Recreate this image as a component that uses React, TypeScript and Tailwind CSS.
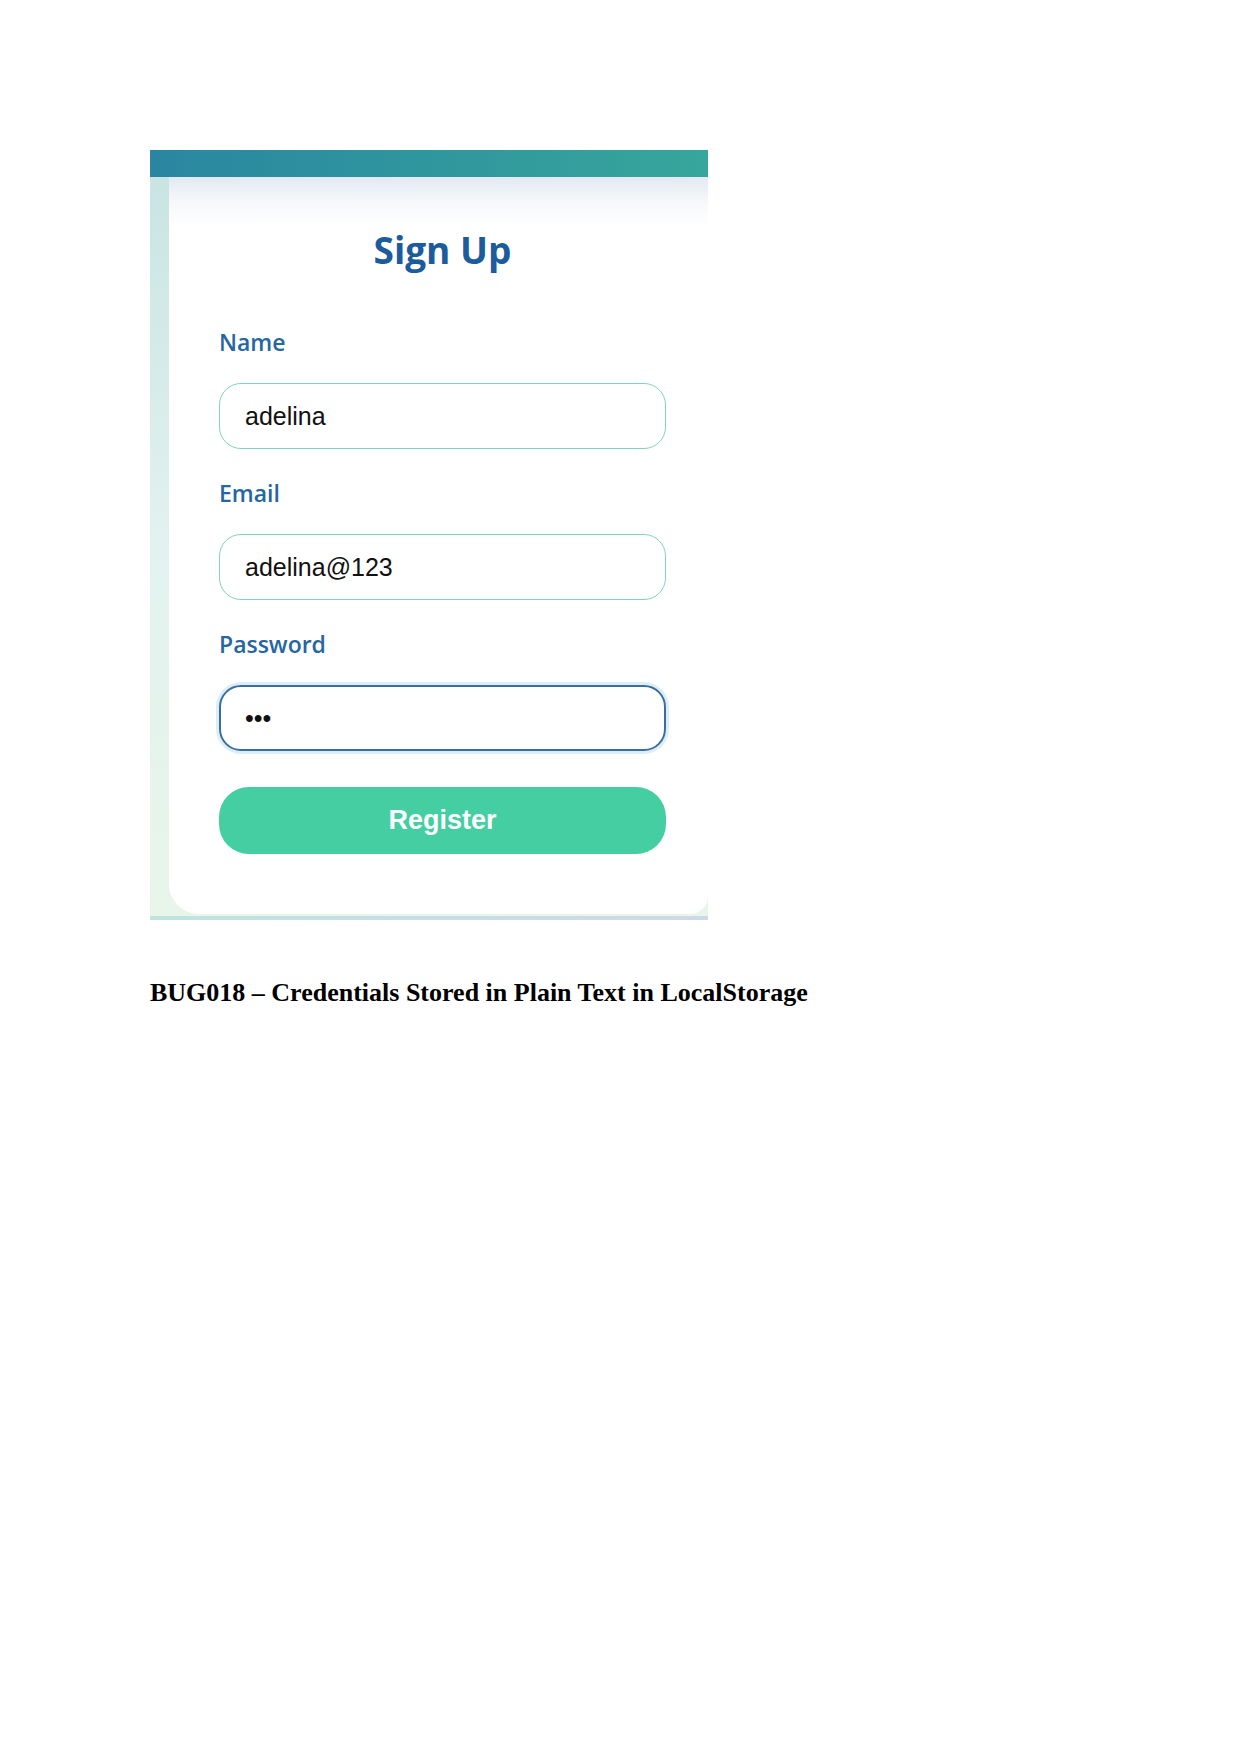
export default function App() {
  return (
    <div className="min-h-[1755px] bg-white pl-[150px] pt-[150px]">
      <div className="flex h-[770px] w-[558px] flex-col">
        <div className="h-[27px] bg-gradient-to-r from-[#2a86a0] to-[#37a69b]" />
        <div className="flex flex-1 bg-gradient-to-b from-[#c9e4e3] via-[#e2f2ef] to-[#e8f5e9] pb-[2px] pl-[19px]">
          <div className="flex flex-1 flex-col items-stretch rounded-bl-[30px] rounded-br-[18px] bg-[linear-gradient(to_bottom,#e3e8f2_0px,#f6f8fb_25px,#ffffff_50px)] pl-[50px] pr-[42px]">
            <h1 className="mt-[49px] text-center font-['Open_Sans','Noto_Sans',sans-serif] text-[37px] font-bold leading-[48px] text-[#1c5b9c]">
              Sign Up
            </h1>
            <Field label="Name" value="adelina" mt="mt-[54px]" />
            <Field label="Email" value="adelina@123" mt="mt-[30px]" />
            <Field label="Password" value="abc" mt="mt-[30px]" password />
            <button className="mt-[36px] h-[67px] rounded-[30px] bg-[#44cea1] font-['Liberation_Sans',Arial,sans-serif] text-[27px] font-bold text-white">
              Register
            </button>
          </div>
        </div>
        <div className="h-[4px] bg-gradient-to-r from-[#bfe3e0] to-[#cfd8e8]" />
      </div>
      <p className="mt-[58px] font-['Liberation_Serif','Times_New_Roman',serif] text-[26px] font-bold leading-[30px] text-black">
        BUG018 – Credentials Stored in Plain Text in LocalStorage
      </p>
    </div>
  );
}

function Field({
  label,
  value,
  mt,
  password,
}: {
  label: string;
  value: string;
  mt: string;
  password?: boolean;
}) {
  return (
    <div className={`flex flex-col ${mt}`}>
      <label className="font-['Open_Sans','Noto_Sans',sans-serif] text-[23px] font-semibold leading-[28px] text-[#2566a3]">
        {label}
      </label>
      <input
        readOnly
        type={password ? "password" : "text"}
        value={value}
        className={
          password
            ? "mt-[27px] h-[66px] rounded-[22px] border-2 border-[#3b6e9e] pl-[24px] font-['Liberation_Sans',Arial,sans-serif] text-[25px] text-[#111] shadow-[0_0_0_3px_#dceef8] outline-none"
            : "mt-[27px] h-[66px] rounded-[22px] border border-[#7fd4bb] pl-[25px] font-['Liberation_Sans',Arial,sans-serif] text-[25px] text-[#111] outline-none"
        }
      />
    </div>
  );
}
